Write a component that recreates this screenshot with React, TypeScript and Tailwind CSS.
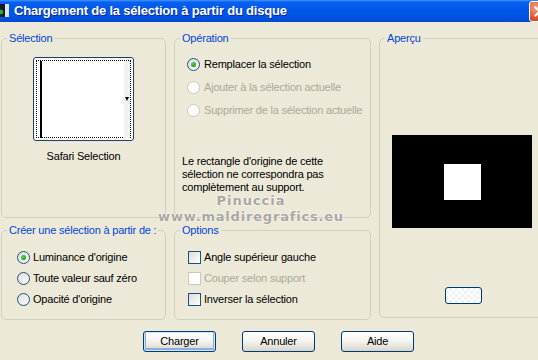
import React from "react";

function Radio({ checked = false, disabled = false }: { checked?: boolean; disabled?: boolean }) {
  return (
    <span
      className={
        "flex h-[13px] w-[13px] shrink-0 items-center justify-center rounded-full border " +
        (disabled
          ? "border-[#CAC8BB] bg-white"
          : "border-[#1C5180] bg-gradient-to-br from-[#DCDCD7] to-white")
      }
    >
      {checked && <span className="h-[5px] w-[5px] rounded-full bg-[radial-gradient(circle_at_35%_35%,#55D551,#21A121_70%)]" />}
    </span>
  );
}

function Check({ disabled = false }: { disabled?: boolean }) {
  return (
    <span
      className={
        "block h-[13px] w-[13px] shrink-0 border " +
        (disabled
          ? "border-[#CAC8BB] bg-white"
          : "border-[#1C5180] bg-gradient-to-br from-[#DCDCD7] to-white")
      }
    />
  );
}

function Btn({ label, def = false }: { label: string; def?: boolean }) {
  return (
    <div
      className={
        "flex h-[21px] w-[73px] items-center justify-center rounded-[3px] border border-[#003C74] bg-gradient-to-b from-white via-[#F4F3EE] to-[#D8D4C8] text-[11px] " +
        (def ? "shadow-[inset_0_0_0_1px_#CEE7FF,inset_0_-1px_0_2px_#89ADE4]" : "")
      }
    >
      {label}
    </div>
  );
}

function Group({ title, className, children }: { title: string; className: string; children?: React.ReactNode }) {
  return (
    <fieldset className={"rounded-[5px] border border-[#D0D0BF] " + className}>
      <legend className="ml-[5px] px-[2px] text-[11px] leading-[13px] text-[#0046D5]">{title}</legend>
      {children}
    </fieldset>
  );
}

export default function App() {
  return (
    <div className="relative h-[360px] w-[538px] overflow-hidden bg-[#ECE9D8] font-['Liberation_Sans',Arial,sans-serif] text-[11px] leading-[13px] tracking-[-0.2px] text-black">
      {/* Title bar */}
      <div className="flex h-[22px] w-[552px] items-center bg-[linear-gradient(to_bottom,#3D95FF_0%,#0A5FF0_10%,#0058E8_45%,#0053E3_80%,#004AD0_100%)]">
        <svg className="ml-[-6px] shrink-0" width="16" height="16" viewBox="0 0 16 16">
          <rect x="0" y="1" width="15" height="13" fill="#1a1a2e" />
          <rect x="11" y="1" width="4" height="13" fill="#dfe6f0" />
          <circle cx="4" cy="6" r="2.2" fill="#d22" />
          <circle cx="7" cy="9" r="2.2" fill="#2b2" />
          <circle cx="4" cy="11" r="1.8" fill="#36f" />
        </svg>
        <span className="ml-[4px] text-[13px] font-bold leading-[16px] tracking-[-0.2px] text-white [text-shadow:1px_1px_0_#0A2A9A]">
          Chargement de la sélection à partir du disque
        </span>
        <div className="ml-auto mr-[2px] flex h-[21px] w-[21px] items-center justify-center rounded-[3px] border border-white bg-[radial-gradient(circle_at_30%_30%,#F39F84,#E0522F_55%,#C8391A)]">
          <svg width="11" height="11" viewBox="0 0 11 11">
            <path d="M1.5 1.5 L9.5 9.5 M9.5 1.5 L1.5 9.5" stroke="white" strokeWidth="2.2" strokeLinecap="square" />
          </svg>
        </div>
      </div>

      {/* Body */}
      <div className="grid grid-cols-[165px_197px_170px] grid-rows-[186px_96px] gap-x-[8px] gap-y-[6px] pl-[1px] pt-[10px]">
        <Group title="Sélection" className="col-start-1 row-start-1 flex flex-col items-center">
          <div className="relative mt-[12px] h-[84px] w-[101px] rounded-[3px] border border-[#1C3F6F] bg-white">
            <div className="absolute inset-[2px] border border-dotted border-black" />
            <div className="absolute left-[6px] top-[3px] h-[77px] w-[2px] bg-black" />
            <div className="absolute right-[3px] top-[3px] h-[77px] w-[6px] bg-[#F2F2F2]" />
            <div className="absolute right-[4px] top-[39px] h-0 w-0 border-l-[2.5px] border-r-[2.5px] border-t-[4px] border-l-transparent border-r-transparent border-t-black" />
          </div>
          <div className="mt-[9px]">Safari Selection</div>
        </Group>

        <Group title="Opération" className="col-start-2 row-start-1 flex flex-col">
          <div className="ml-[12px] mt-[13px] flex flex-col gap-[10px]">
            <div className="flex h-[13px] items-center gap-[4px]">
              <Radio checked />
              <span>Remplacer la sélection</span>
            </div>
            <div className="flex h-[13px] items-center gap-[4px] text-[#ACA899]">
              <Radio disabled />
              <span>Ajouter à la sélection actuelle</span>
            </div>
            <div className="flex h-[13px] items-center gap-[4px] text-[#ACA899]">
              <Radio disabled />
              <span>Supprimer de la sélection actuelle</span>
            </div>
          </div>
          <div className="ml-[7px] mt-[38px] leading-[13px]">
            Le rectangle d'origine de cette
            <br />
            sélection ne correspondra pas
            <br />
            complètement au support.
          </div>
        </Group>

        <Group title="Aperçu" className="col-start-3 row-span-2 row-start-1 flex h-[286px] flex-col">
          <div className="ml-[12px] mt-[90px] flex h-[93px] w-[140px] items-center justify-center bg-black">
            <div className="h-[36px] w-[37px] bg-white" />
          </div>
          <div className="ml-[65px] mt-[59px] h-[17px] w-[37px] rounded-[3px] border border-[#003C74] bg-[conic-gradient(#F2F2F2_25%,#FFFFFF_0_50%,#F2F2F2_0_75%,#FFFFFF_0)] bg-[length:6px_6px]" />
        </Group>

        <Group title="Créer une sélection à partir de :" className="col-start-1 row-start-2 flex flex-col">
          <div className="ml-[15px] mt-[14px] flex flex-col gap-[8px]">
            <div className="flex h-[13px] items-center gap-[3px]">
              <Radio checked />
              <span>Luminance d'origine</span>
            </div>
            <div className="flex h-[13px] items-center gap-[3px]">
              <Radio />
              <span>Toute valeur sauf zéro</span>
            </div>
            <div className="flex h-[13px] items-center gap-[3px]">
              <Radio />
              <span>Opacité d'origine</span>
            </div>
          </div>
        </Group>

        <Group title="Options" className="col-start-2 row-start-2 flex flex-col">
          <div className="ml-[13px] mt-[14px] flex flex-col gap-[8px]">
            <div className="flex h-[13px] items-center gap-[3px]">
              <Check />
              <span>Angle supérieur gauche</span>
            </div>
            <div className="flex h-[13px] items-center gap-[3px] text-[#ACA899]">
              <Check disabled />
              <span>Couper selon support</span>
            </div>
            <div className="flex h-[13px] items-center gap-[3px]">
              <Check />
              <span>Inverser la sélection</span>
            </div>
          </div>
        </Group>
      </div>

      {/* Buttons */}
      <div className="mt-[11px] flex gap-[26px] pl-[143px]">
        <Btn label="Charger" def />
        <Btn label="Annuler" />
        <Btn label="Aide" />
      </div>

      {/* Watermark */}
      <div className="pointer-events-none absolute left-[151px] top-[194px] flex w-[200px] flex-col items-center gap-[3px] font-['DejaVu_Sans',sans-serif] font-bold leading-[13px] text-[#A9A79F] [text-shadow:0_0_2px_#fff,0_0_1px_#fff]">
        <span className="text-[13px] tracking-[1px]">Pinuccia</span>
        <span className="text-[13px] tracking-[0.8px]">www.maldiregrafics.eu</span>
      </div>
    </div>
  );
}
